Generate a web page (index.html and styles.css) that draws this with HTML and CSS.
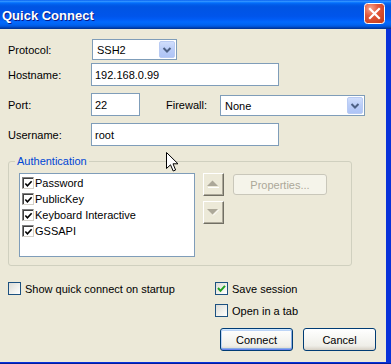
FILE: index.html
```html
<!DOCTYPE html>
<html>
<head>
<meta charset="utf-8">
<link rel="stylesheet" href="styles.css">
</head>
<body>
<div class="window">
  <div class="titlebar">
    <span class="title">Quick Connect</span>
    <span class="close">
      <svg width="21" height="21" viewBox="0 0 21 21">
        <defs>
          <radialGradient id="cg" cx="30%" cy="25%" r="85%">
            <stop offset="0" stop-color="#F6A48D"/>
            <stop offset="0.45" stop-color="#E3573A"/>
            <stop offset="1" stop-color="#C7401E"/>
          </radialGradient>
        </defs>
        <rect x="0.5" y="0.5" width="20" height="20" rx="3" fill="url(#cg)" stroke="#fff"/>
        <path d="M6 6 L15 15 M15 6 L6 15" stroke="#fff" stroke-width="2.2" stroke-linecap="square"/>
      </svg>
    </span>
  </div>
  <div class="client">
    <div class="row r1">
      <span class="lbl lbl-combo">Protocol:</span>
      <div class="combo w-proto"><span class="combo-text">SSH2</span><span class="drop"><svg width="16" height="17" viewBox="0 0 16 17"><path d="M4.5 7 L8 10.5 L11.5 7" fill="none" stroke="#4D6185" stroke-width="2"/></svg></span></div>
    </div>
    <div class="row r2">
      <span class="lbl">Hostname:</span>
      <div class="edit w-host">192.168.0.99</div>
    </div>
    <div class="row r3">
      <span class="lbl">Port:</span>
      <div class="edit w-port">22</div>
      <span class="fw">Firewall:</span>
      <div class="combo w-fw"><span class="combo-text">None</span><span class="drop"><svg width="16" height="17" viewBox="0 0 16 17"><path d="M4.5 7 L8 10.5 L11.5 7" fill="none" stroke="#4D6185" stroke-width="2"/></svg></span></div>
    </div>
    <div class="row r4">
      <span class="lbl">Username:</span>
      <div class="edit w-host">root</div>
    </div>
    <fieldset class="group">
      <legend>Authentication</legend>
      <div class="group-inner">
        <div class="list">
          <div class="item"><span class="lcheck"><svg width="10" height="10" viewBox="0 0 10 10"><path d="M1.5 4.5 L3.8 7 L8.5 2" fill="none" stroke="#000" stroke-width="1.8"/></svg></span>Password</div>
          <div class="item"><span class="lcheck"><svg width="10" height="10" viewBox="0 0 10 10"><path d="M1.5 4.5 L3.8 7 L8.5 2" fill="none" stroke="#000" stroke-width="1.8"/></svg></span>PublicKey</div>
          <div class="item"><span class="lcheck"><svg width="10" height="10" viewBox="0 0 10 10"><path d="M1.5 4.5 L3.8 7 L8.5 2" fill="none" stroke="#000" stroke-width="1.8"/></svg></span>Keyboard Interactive</div>
          <div class="item"><span class="lcheck"><svg width="10" height="10" viewBox="0 0 10 10"><path d="M1.5 4.5 L3.8 7 L8.5 2" fill="none" stroke="#000" stroke-width="1.8"/></svg></span>GSSAPI</div>
        </div>
        <div class="arrows">
          <span class="cbtn"><svg width="19" height="21" viewBox="0 0 19 21"><polygon points="3,12 14,12 8.5,6.5" fill="#ACA899"/><line x1="4" y1="13.5" x2="15" y2="13.5" stroke="#fff"/></svg></span>
          <span class="cbtn"><svg width="19" height="21" viewBox="0 0 19 21"><polygon points="3,7 14,7 8.5,12.5" fill="#ACA899"/><path d="M9 13.5 L15 7.5" stroke="#fff"/></svg></span>
        </div>
        <span class="props">Properties...</span>
      </div>
    </fieldset>
    <div class="bottom">
      <div class="bcol-left">
        <label class="check"><span class="xbox"></span>Show quick connect on startup</label>
      </div>
      <div class="bcol-right">
        <label class="check"><span class="xbox"><svg width="11" height="11" viewBox="0 0 11 11"><path d="M2 5 L4.5 7.8 L9 2.8" fill="none" stroke="#21A121" stroke-width="2"/></svg></span>Save session</label>
        <label class="check c2"><span class="xbox"></span>Open in a tab</label>
        <div class="buttons">
          <span class="btn default">Connect</span>
          <span class="btn">Cancel</span>
        </div>
      </div>
    </div>
  </div>
  <svg class="cursor" width="13" height="20" viewBox="0 0 13 20">
    <path d="M0.5 0.5 L0.5 16.5 L4.5 12.8 L7.2 19 L9.6 18 L7 11.8 L12 11.8 Z" fill="#fff" stroke="#000" stroke-width="1"/>
  </svg>
</div>
</body>
</html>
```

FILE: styles.css
```css
* { box-sizing: border-box; }
html, body { margin: 0; padding: 0; }
body {
  font-family: "Liberation Sans", Arial, sans-serif;
  font-size: 11px;
  color: #000;
  background: #ECE9D8;
}
.window {
  position: relative;
  width: 391px;
  height: 364px;
  display: flex;
  flex-direction: column;
  background: linear-gradient(to right, #0831D9 0, #0831D9 100%);
  border-bottom: 1px solid #001EA0;
}
.titlebar {
  flex: none;
  height: 29px;
  display: flex;
  align-items: center;
  justify-content: space-between;
  padding: 0 6px 0 2px;
  background: linear-gradient(to bottom,
    #0058EE 0%, #3593FF 4%, #288EFF 6%, #127DFF 8%, #036FFC 10%,
    #0262EE 14%, #0057E5 20%, #0054E3 24%, #0055EB 56%, #005BF5 66%,
    #026AFE 76%, #0062EF 86%, #0052D6 92%, #0040AB 96%, #003092 100%);
}
.title {
  font-weight: bold;
  font-size: 13px;
  color: #fff;
  text-shadow: 1px 1px 0 #0A1883;
  margin-top: 1px;
}
.close {
  align-self: flex-start;
  margin-top: 3px;
  width: 21px;
  height: 21px;
  display: block;
}
.close svg { display: block; }
.client {
  flex: 1;
  margin: 0 5px 1px 0;
  background: #ECE9D8;
  padding: 10px 0 0 8px;
  display: flex;
  flex-direction: column;
}
.row { display: flex; align-items: center; }
.lbl { width: 83px; flex: none; }
.lbl-combo { width: 84px; }
.r2 { margin-top: 3px; }
.r3 { margin-top: 7px; }
.r4 { margin-top: 7px; }
.edit {
  height: 23px;
  border: 1px solid #7F9DB9;
  background: #fff;
  padding: 0 3px;
  display: flex;
  align-items: center;
}
.w-host { width: 188px; }
.w-port { width: 49px; }
.fw { margin-left: 26px; width: 54px; }
.combo {
  height: 21px;
  border: 1px solid #7F9DB9;
  background: #fff;
  padding: 1px;
  display: flex;
  align-items: center;
  justify-content: space-between;
}
.r3 .combo { align-self: flex-end; }
.combo-text { padding-left: 3px; }
.w-proto { width: 85px; }
.w-fw { width: 145px; }
.drop {
  width: 16px;
  height: 17px;
  border-radius: 2px;
  border: 1px solid #B9CBF3;
  background: linear-gradient(to bottom, #D0DEFC 0%, #BACDF8 50%, #AEC4F6 100%);
  display: block;
}
.drop svg { display: block; margin: -1px 0 0 -1px; }
.group {
  margin: 9px 0 0 0;
  width: 344px;
  min-width: 0;
  border: 1px solid #D0D0BF;
  border-radius: 3px;
  padding: 0;
}
.group legend {
  color: #0046D5;
  line-height: 13px;
  padding: 0 2px;
  margin-left: 6px;
}
.group-inner {
  display: flex;
  align-items: flex-start;
  padding: 5px 0 8px 10px;
}
.list {
  width: 176px;
  height: 84px;
  border: 1px solid #7F9DB9;
  background: #fff;
  padding: 1px 2px;
}
.item {
  height: 16px;
  display: flex;
  align-items: center;
}
.lcheck {
  width: 12px;
  height: 12px;
  margin-right: 1px;
  background: #fff;
  border-top: 1px solid #808080;
  border-left: 1px solid #808080;
  border-right: 1px solid #D4D0C8;
  border-bottom: 1px solid #D4D0C8;
  box-shadow: inset 1px 1px 0 #404040;
  display: flex;
  align-items: center;
  justify-content: center;
}
.lcheck svg { display: block; margin: 1px 0 0 1px; }
.arrows {
  margin-left: 8px;
  display: flex;
  flex-direction: column;
  gap: 5px;
}
.cbtn {
  width: 21px;
  height: 23px;
  display: block;
  background: #ECE9D8;
  border-top: 1px solid #fff;
  border-left: 1px solid #fff;
  border-right: 1px solid #716F64;
  border-bottom: 1px solid #716F64;
  box-shadow: inset -1px -1px 0 #ACA899;
}
.cbtn svg { display: block; }
.props {
  margin: 1px 0 0 9px;
  width: 94px;
  height: 21px;
  border: 1px solid #C9C7BA;
  border-radius: 3px;
  background: #F5F4EA;
  color: #ACA899;
  display: flex;
  align-items: center;
  justify-content: center;
}
.bottom {
  margin-top: 16px;
  display: flex;
}
.bcol-left { width: 207px; flex: none; }
.bcol-right { display: flex; flex-direction: column; }
.check {
  height: 13px;
  display: flex;
  align-items: center;
  gap: 4px;
}
.c2 { margin-top: 9px; }
.xbox {
  width: 13px;
  height: 13px;
  flex: none;
  border: 1px solid #1C5180;
  background: linear-gradient(135deg, #DCDCD7 0%, #F2F2EE 60%, #FFFFFF 100%);
  display: block;
}
.xbox svg { display: block; margin: 0; }
.buttons {
  margin: 11px 0 0 5px;
  display: flex;
  gap: 10px;
}
.btn {
  width: 73px;
  height: 23px;
  border: 1px solid #003C74;
  border-radius: 3px;
  background: linear-gradient(to bottom, #FFFFFF 0%, #F7F7F4 40%, #EFEEE8 80%, #D6D0C5 100%);
  display: flex;
  align-items: center;
  justify-content: center;
}
.btn.default {
  box-shadow: inset 0 1px 0 #CEE7FF, inset 0 -1px 0 #6982EE, inset 1px 0 0 #BCD4F6, inset -1px 0 0 #89ADE4, inset 0 2px 0 #BCD4F6, inset 0 -2px 0 #89ADE4;
}
.cursor {
  position: absolute;
  left: 166px;
  top: 152px;
  display: block;
}
```
